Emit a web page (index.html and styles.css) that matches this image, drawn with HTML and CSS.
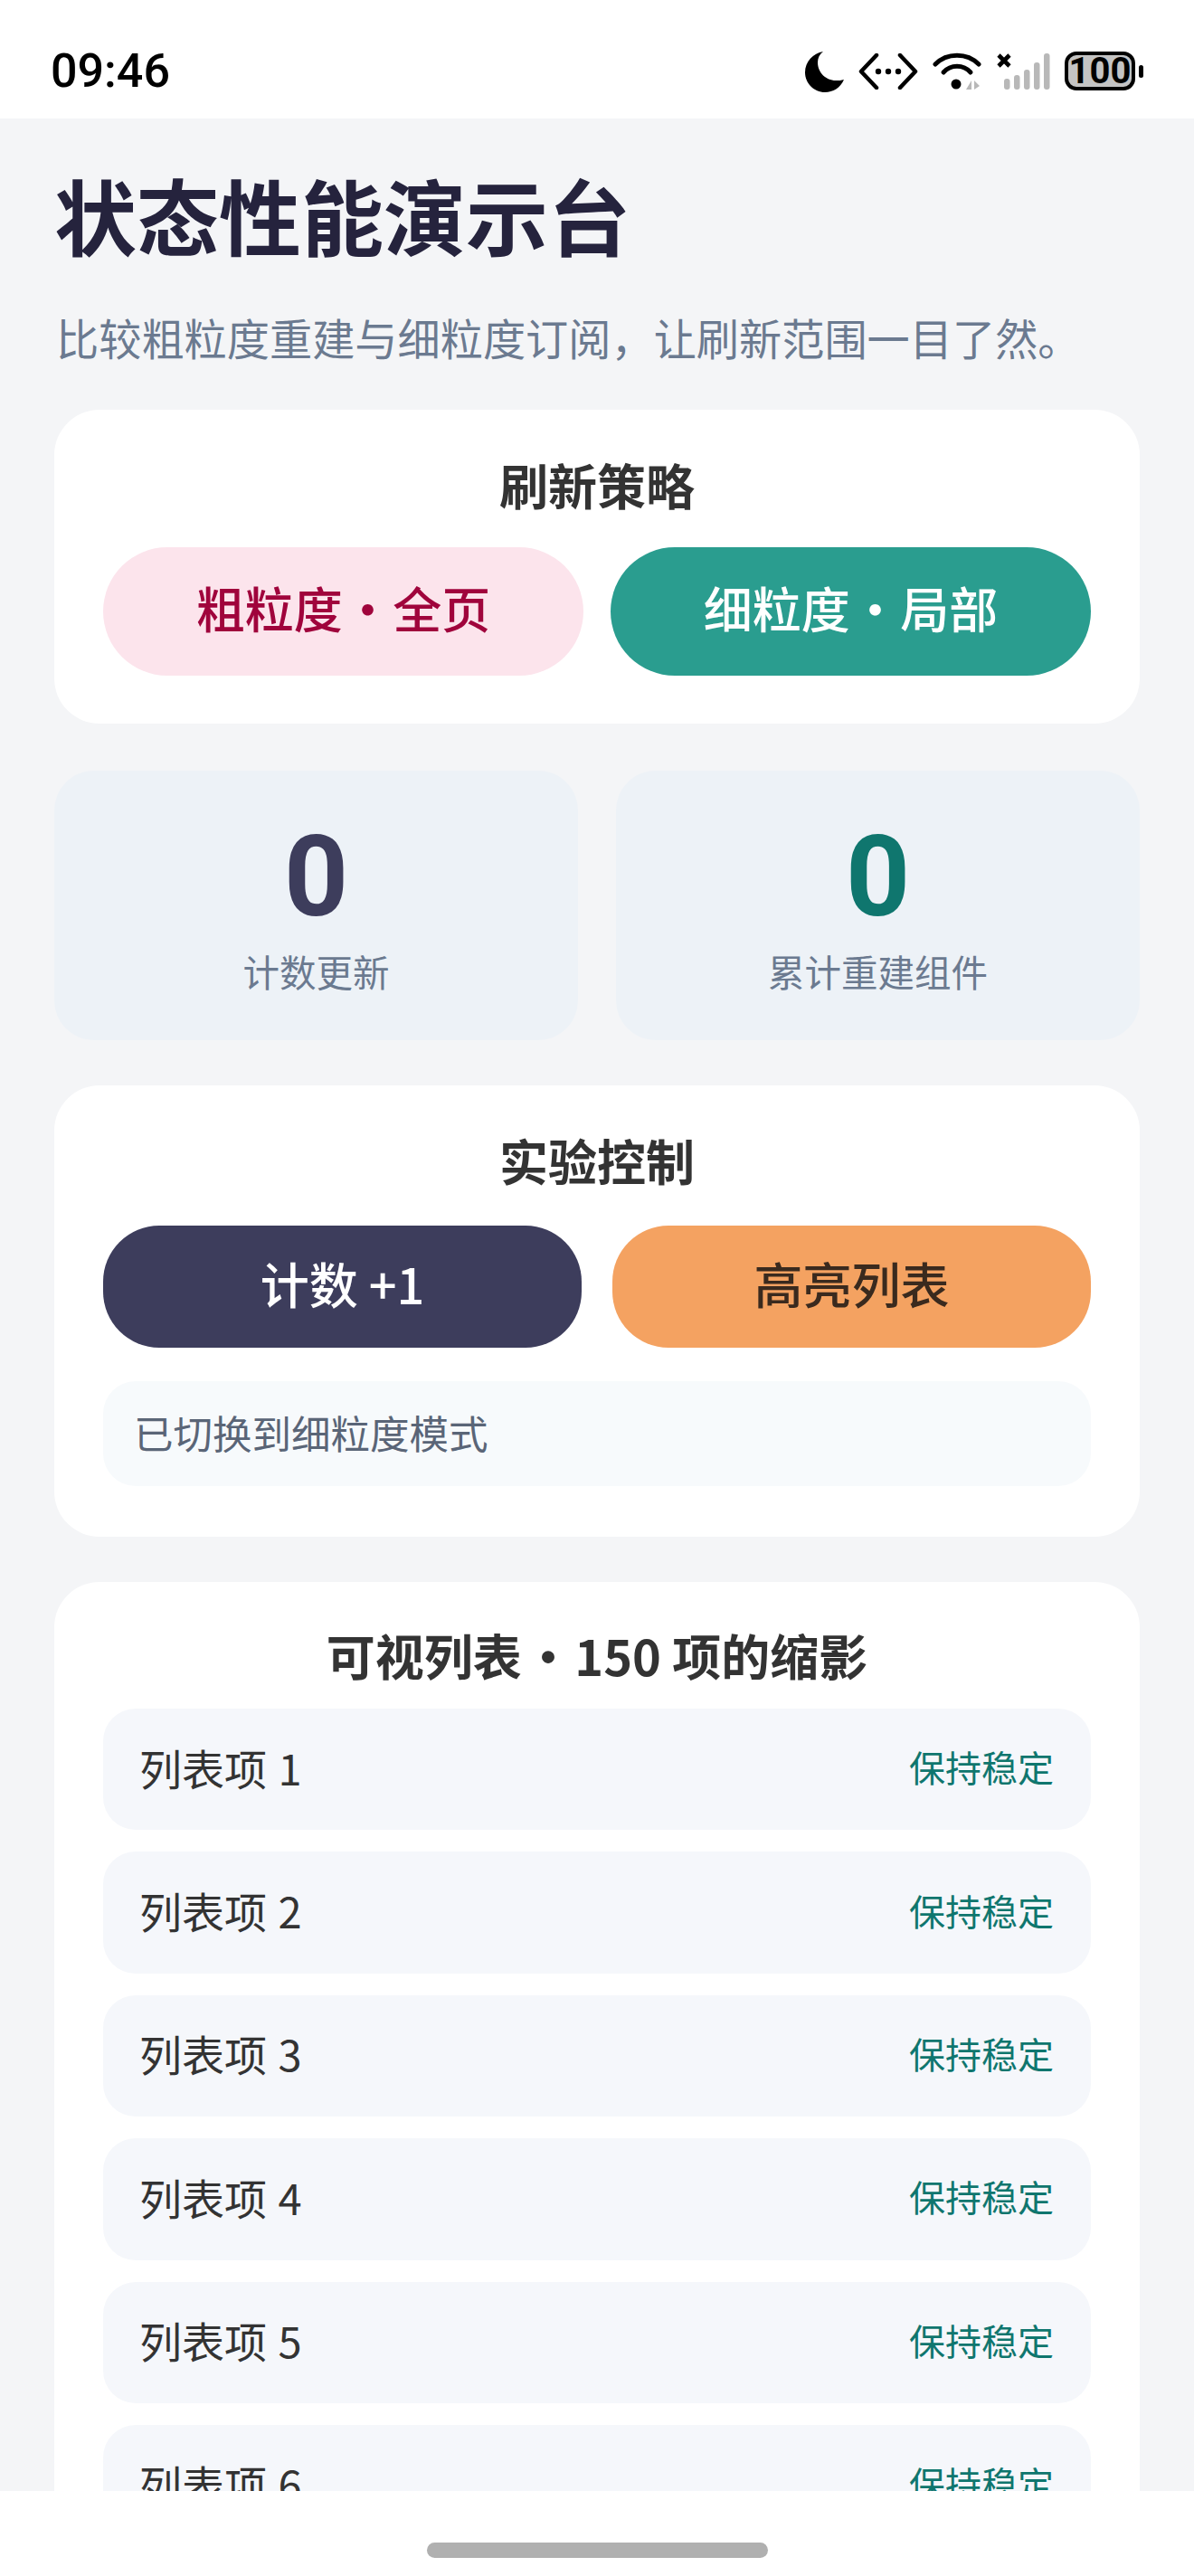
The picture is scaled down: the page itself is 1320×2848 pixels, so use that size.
FILE: index.html
```html
<!DOCTYPE html>
<html lang="zh-CN">
<head>
    <meta charset="UTF-8">
    <meta name="viewport" content="width=device-width, initial-scale=1">
    <title>状态性能演示台</title>
    <link rel="stylesheet" href="styles.css">
</head>
<body>

    <!-- Status bar -->
    <div class="status-bar">
        <span class="clock">09:46</span>
        <div class="status-icons">
            <svg class="icon-moon" width="44" height="46" viewBox="0 0 44 46">
                <path d="M21 1 C10 3 1 12 1 24 C1 36 11 46 23 46 C32 46 40 41 44 32 C41 33 38 33 35 33 C24 33 15 24 15 13 C15 8 17 4 21 1 Z" fill="#000"/>
            </svg>
            <svg class="icon-code" width="66" height="40" viewBox="0 0 66 40">
                <path d="M20 2 L3 20 L20 38 M46 2 L63 20 L46 38" fill="none" stroke="#000" stroke-width="4.5" stroke-linecap="round" stroke-linejoin="round"/>
                <circle cx="22" cy="20" r="3.2" fill="#000"/>
                <circle cx="33" cy="20" r="3.2" fill="#000"/>
                <circle cx="44" cy="20" r="3.2" fill="#000"/>
            </svg>
            <svg class="icon-wifi" width="54" height="42" viewBox="0 0 54 42">
                <path d="M3 13 C16 0 38 0 51 13" fill="none" stroke="#000" stroke-width="5" stroke-linecap="round"/>
                <path d="M12 22 C20 13 34 13 42 22" fill="none" stroke="#000" stroke-width="5" stroke-linecap="round"/>
                <circle cx="26" cy="35" r="5.5" fill="#000"/>
                <path d="M43 31 L43 41 L37 41 Z M46 31 L52 37 L46 41 Z" fill="#b8b8b8"/>
            </svg>
            <svg class="icon-signal" width="60" height="42" viewBox="0 0 60 42">
                <path d="M3 3 L15 15 M15 3 L3 15" fill="none" stroke="#000" stroke-width="4.6"/>
                <rect x="9" y="29" width="6.5" height="12" rx="3" fill="#b8b8b8"/>
                <rect x="20" y="25" width="6.5" height="16" rx="3" fill="#b8b8b8"/>
                <rect x="31" y="19" width="6.5" height="22" rx="3" fill="#b8b8b8"/>
                <rect x="42" y="11" width="6.5" height="30" rx="3" fill="#b8b8b8"/>
                <rect x="53" y="1" width="6.5" height="40" rx="3" fill="#b8b8b8"/>
            </svg>
            <div class="battery">
                <span class="battery-body">100</span>
                <span class="battery-nub"></span>
            </div>
        </div>
    </div>

    <div class="content">
        <h1>状态性能演示台</h1>
        <p class="subtitle">比较粗粒度重建与细粒度订阅，让刷新范围一目了然。</p>

        <!-- Refresh strategy -->
        <section class="card card-strategy">
            <h2>刷新策略</h2>
            <div class="btn-row">
                <button class="btn btn-pill btn-pink">粗粒度 · 全页</button>
                <button class="btn btn-pill btn-teal">细粒度 · 局部</button>
            </div>
        </section>

        <!-- Counters -->
        <div class="stats">
            <div class="stat">
                <div class="stat-num navy">0</div>
                <div class="stat-label">计数更新</div>
            </div>
            <div class="stat">
                <div class="stat-num green">0</div>
                <div class="stat-label">累计重建组件</div>
            </div>
        </div>

        <!-- Controls -->
        <section class="card card-controls">
            <h2>实验控制</h2>
            <div class="btn-row">
                <button class="btn btn-navy">计数 +1</button>
                <button class="btn btn-orange">高亮列表</button>
            </div>
            <div class="notice">已切换到细粒度模式</div>
        </section>

        <!-- List -->
        <section class="card card-list">
            <h2><span class="tight">可视列表 · 150</span> 项的缩影</h2>
            <ul class="list">
                <li><span>列表项 1</span><span class="tag">保持稳定</span></li>
                <li><span>列表项 2</span><span class="tag">保持稳定</span></li>
                <li><span>列表项 3</span><span class="tag">保持稳定</span></li>
                <li><span>列表项 4</span><span class="tag">保持稳定</span></li>
                <li><span>列表项 5</span><span class="tag">保持稳定</span></li>
                <li><span>列表项 6</span><span class="tag">保持稳定</span></li>
            </ul>
        </section>
    </div>

    <!-- Gesture bar -->
    <div class="nav-bar">
        <div class="home-pill"></div>
    </div>

</body>
</html>
```

FILE: styles.css
```css
* {
    box-sizing: border-box;
}

html, body {
    height: 100%;
}

body {
    margin: 0;
    height: 2848px;
    display: flex;
    flex-direction: column;
    overflow: hidden;
    background-color: #f4f5f7;
    color: #333;
    font-family: 'Noto Sans CJK SC', 'Noto Sans', sans-serif;
}

.status-bar {
    flex: none;
    height: 131px;
    padding: 26px 56px 0 56px;
    display: flex;
    justify-content: space-between;
    align-items: center;
    background-color: #fff;
}

.clock {
    font-family: Roboto, sans-serif;
    font-weight: 500;
    font-size: 52px;
    line-height: 60px;
    color: #000;
}

.status-icons {
    display: flex;
    align-items: center;
    gap: 16px;
}

.battery {
    display: flex;
    align-items: center;
    gap: 4px;
}

.battery-body {
    width: 78px;
    height: 43px;
    border: 4px solid #000;
    border-radius: 13px;
    background-color: #c4c4c4;
    display: flex;
    align-items: center;
    justify-content: center;
    font-family: Roboto, sans-serif;
    font-weight: 700;
    font-size: 40px;
    line-height: 1;
    color: #000;
}

.battery-nub {
    width: 5px;
    height: 14px;
    border-radius: 3px;
    background-color: #000;
}

.content {
    flex: 1;
    min-height: 0;
    overflow: hidden;
    padding: 55px 60px 0;
}

h1 {
    margin: 0 0 57px;
    font-size: 91px;
    line-height: 100px;
    font-weight: 700;
    color: #25233d;
}

.subtitle {
    margin: 0 0 50px;
    padding-left: 2px;
    font-size: 47.2px;
    line-height: 60px;
    color: #6b7a90;
}

.card {
    background-color: #fff;
    border-radius: 50px;
    padding: 48px 54px 56px;
    margin-bottom: 50px;
}

.card h2 {
    margin: 0;
    text-align: center;
    font-size: 54px;
    line-height: 70px;
    font-weight: 700;
    color: #333;
}

.tight {
    word-spacing: -10px;
}

.btn-row {
    display: flex;
    gap: 30px;
}

.card-strategy {
    padding-bottom: 53px;
    margin-bottom: 52px;
}

.card-strategy .btn-row {
    margin-top: 34px;
}

.card-controls .btn-row {
    margin-top: 37px;
    gap: 34px;
}

.btn {
    flex: 1;
    height: 135px;
    padding: 0 0 9px;
    border: none;
    border-radius: 62px;
    font-family: inherit;
    font-size: 54px;
    font-weight: 500;
}

.btn-pill {
    height: 142px;
    border-radius: 71px;
    word-spacing: -11.5px;
}

.btn-pink {
    background-color: #fce4ec;
    color: #a0043c;
}

.btn-teal {
    background-color: #2a9d8f;
    color: #fff;
}

.btn-navy {
    background-color: #3d3d5c;
    color: #fff;
}

.btn-orange {
    background-color: #f4a261;
    color: #3a2a1e;
}

.stats {
    display: flex;
    gap: 42px;
    margin-bottom: 50px;
}

.stat {
    flex: 1;
    height: 298px;
    padding-top: 48px;
    border-radius: 44px;
    background-color: #edf2f7;
    text-align: center;
}

.stat-num {
    font-family: Roboto, sans-serif;
    font-weight: 700;
    font-size: 124px;
    line-height: 140px;
}

.navy {
    color: #3d3d5c;
}

.green {
    color: #0f766e;
}

.stat-label {
    margin-top: 4px;
    font-size: 40.5px;
    line-height: 60px;
    color: #6b7a90;
}

.notice {
    height: 116px;
    margin-top: 37px;
    padding: 0 34px 3px;
    display: flex;
    align-items: center;
    border-radius: 36px;
    background-color: #f7fafc;
    font-size: 43.5px;
    color: #5a6577;
}

.card-list {
    padding-top: 46px;
}

.list {
    list-style: none;
    margin: 24px 0 0;
    padding: 0;
    display: flex;
    flex-direction: column;
    gap: 24px;
}

.list li {
    height: 134.4px;
    padding: 0 41px 6px 40px;
    display: flex;
    justify-content: space-between;
    align-items: center;
    border-radius: 36px;
    background-color: #f5f7fb;
    font-size: 47px;
    word-spacing: 2px;
    color: #333;
}

.tag {
    font-size: 40px;
    color: #0f766e;
}

.nav-bar {
    flex: none;
    height: 94px;
    padding-top: 57px;
    display: flex;
    justify-content: center;
    background-color: #fff;
}

.home-pill {
    width: 377px;
    height: 17px;
    border-radius: 9px;
    background-color: #b0b0b0;
}
```
